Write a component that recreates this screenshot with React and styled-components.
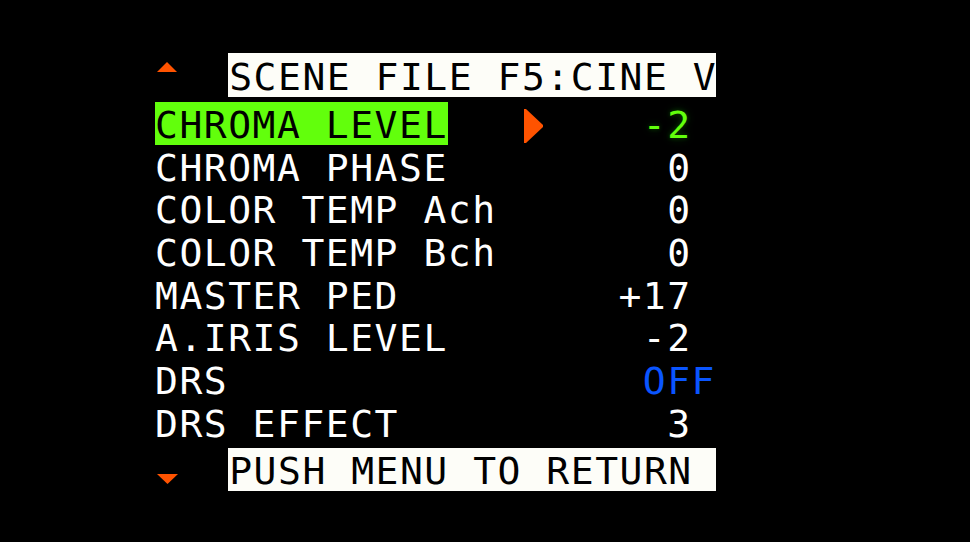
import React from "react";
import styled, { createGlobalStyle } from "styled-components";

const CELL = 24.4;
const ROW = 42.67;
const ORANGE = "#ff5300";
const GREEN = "#62ff0c";
const BLUE = "#0a55ff";

const Global = createGlobalStyle`
  html, body { margin: 0; padding: 0; background: #000; }
  body { width: 970px; height: 542px; overflow: hidden; }
`;

const Screen = styled.div`
  width: 970px;
  height: 542px;
  background: #000;
  box-sizing: border-box;
  padding: 53px 0 0 155px;
  font-family: "DejaVu Sans Mono", "Liberation Mono", monospace;
  font-size: 38px;
  letter-spacing: 1.52px;
  color: #fff;
`;

const Menu = styled.div`
  width: ${23 * CELL}px;
  display: flex;
  flex-direction: column;
`;

const BoxRow = styled.div`
  display: flex;
  height: ${(p) => p.$h}px;
  margin: ${(p) => p.$m};
`;

const Marker = styled.div`
  width: ${3 * CELL}px;
  display: flex;
  align-items: ${(p) => (p.$down ? "flex-end" : "flex-start")};
  padding: ${(p) => (p.$down ? "0 0 7px 2px" : "9px 0 0 2px")};
  box-sizing: border-box;
`;

const Banner = styled.div`
  width: ${20 * CELL}px;
  background: #fdfdf8;
  color: #000;
  white-space: pre;
  box-sizing: border-box;
  padding-top: 4px;
  padding-left: 1px;
  line-height: ${(p) => p.$h - 4}px;
`;

const Row = styled.div`
  display: grid;
  grid-template-columns: repeat(23, ${CELL}px);
  height: ${ROW}px;
  align-items: stretch;
`;

const Label = styled.div`
  grid-column: 1 / span 15;
  justify-self: start;
  white-space: pre;
  box-sizing: border-box;
  padding-top: 4px;
  line-height: ${ROW - 4}px;
  background: ${(p) => (p.$active ? GREEN : "transparent")};
  color: ${(p) => (p.$active ? "#000" : "#fff")};
`;

const Cursor = styled.div`
  grid-column: 16;
  display: flex;
  align-items: flex-start;
  justify-content: center;
  padding-top: 7px;
`;

const Value = styled.div`
  grid-column: 17 / span 7;
  text-align: right;
  white-space: pre;
  box-sizing: border-box;
  padding-top: 4px;
  padding-right: ${(p) => (p.$wide ? 0 : CELL)}px;
  line-height: ${ROW - 4}px;
  color: ${(p) => p.$color || "#fff"};
  text-shadow: ${(p) =>
    p.$glow ? "0 0 4px #0a3a00, 0 0 8px #0a3a00" : "none"};
`;

const UpArrow = () => (
  <svg width="20" height="10" viewBox="0 0 20 10">
    <polygon points="10,0 20,10 0,10" fill={ORANGE} />
  </svg>
);

const DownArrow = () => (
  <svg width="21" height="10" viewBox="0 0 21 10">
    <polygon points="0,0 21,0 10.5,10" fill={ORANGE} />
  </svg>
);

const RightArrow = () => (
  <svg width="19" height="34" viewBox="0 0 19 34">
    <polygon points="0,0 2,0 19,16 19,18 2,34 0,34" fill={ORANGE} />
  </svg>
);

const items = [
  { label: "CHROMA LEVEL", value: "-2", active: true },
  { label: "CHROMA PHASE", value: "0" },
  { label: "COLOR TEMP Ach", value: "0" },
  { label: "COLOR TEMP Bch", value: "0" },
  { label: "MASTER PED", value: "+17" },
  { label: "A.IRIS LEVEL", value: "-2" },
  { label: "DRS", value: "OFF", color: BLUE, wide: true },
  { label: "DRS EFFECT", value: "3" },
];

export default function App() {
  return (
    <>
      <Global />
      <Screen>
        <Menu>
          <BoxRow $h={44} $m="0 0 5px 0">
            <Marker>
              <UpArrow />
            </Marker>
            <Banner $h={44}>SCENE FILE F5:CINE V</Banner>
          </BoxRow>
          {items.map((it) => (
            <Row key={it.label}>
              <Label $active={it.active}>{it.label}</Label>
              {it.active && (
                <Cursor>
                  <RightArrow />
                </Cursor>
              )}
              <Value
                $wide={it.wide}
                $color={it.active ? GREEN : it.color}
                $glow={it.active}
              >
                {it.value}
              </Value>
            </Row>
          ))}
          <BoxRow $h={43} $m="5px 0 0 0">
            <Marker $down>
              <DownArrow />
            </Marker>
            <Banner $h={43}>PUSH MENU TO RETURN</Banner>
          </BoxRow>
        </Menu>
      </Screen>
    </>
  );
}
